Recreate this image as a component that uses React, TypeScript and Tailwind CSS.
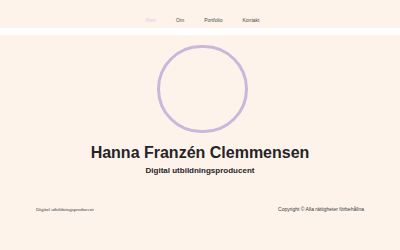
export default function App() {
  const sans = { fontFamily: "'Liberation Sans', Arial, sans-serif" };
  return (
    <div className="w-[400px] h-[250px] bg-[#fdf3eb] flex flex-col overflow-hidden" style={sans}>
      <header className="h-[28px] flex items-center justify-center gap-[20px] pt-[13px] pl-[5px] text-[5px] text-[#4a4a4a]">
        <a className="text-[#e3cbe0]">Hem</a>
        <a>Om</a>
        <a>Portfolio</a>
        <a>Kontakt</a>
      </header>
      <div className="h-[7px] bg-white" />
      <main className="flex flex-col items-center">
        <div className="mt-[10px] ml-[5px] w-[91px] h-[88px] rounded-full border-[3px] border-[#ccb6d9]" />
        <h1 className="mt-[10px] text-[16px] font-bold text-[#262426] leading-[20px]">Hanna Franzén Clemmensen</h1>
        <p className="mt-[2px] text-[8px] font-bold text-[#262426]">Digital utbildningsproducent</p>
      </main>
      <footer className="mt-[29px] flex items-center justify-between px-[36px]">
        <span className="text-[5px] text-[#3a3a3a]" style={{ fontFamily: "'Liberation Serif', 'Times New Roman', serif" }}>
          Digital utbildningsproducent
        </span>
        <span className="text-[5px] text-[#3a3a3a]">Copyright © Alla rättigheter förbehållna</span>
      </footer>
    </div>
  );
}
